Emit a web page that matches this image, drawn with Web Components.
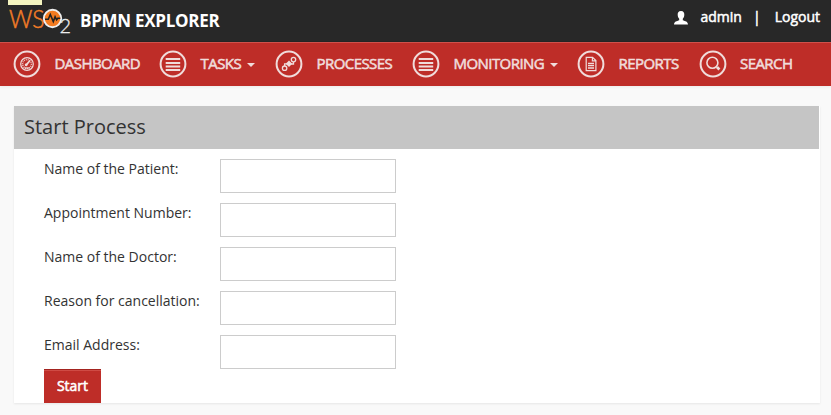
<!DOCTYPE html>
<html lang="en"><head><meta charset="utf-8"><title>BPMN Explorer</title>
<style>html,body{margin:0;height:100%;overflow:hidden;background:#f9f9f9;font-family:"Open Sans","Noto Sans",sans-serif;color:#333}</style></head>
<body><bpmn-app></bpmn-app>
<script>
class Base extends HTMLElement{
  connectedCallback(){ if(!this.shadowRoot) this.attachShadow({mode:'open'}).innerHTML=this.view(); }
}
const ICONS={
 gauge:'<circle cx="14" cy="14" r="6.3" stroke-width="1.2"/><circle cx="14" cy="14" r="4.4" stroke-width="1.5" stroke-dasharray="1 .9" opacity=".85"/><path d="M12.7 15.6 17 10.5" stroke-width="1.7"/><circle cx="13.2" cy="14.8" r="1.4" fill="#f0dcdb" stroke="none"/><path d="M11.5 18h5" stroke-width="1.2"/>',
 list:'<path d="M6.700 9h14.500M6.700 13h14.500M6.700 16.500h14.500M6.700 20h14.500" stroke-width="2.1"/>',
 flow:'<circle cx="9.6" cy="18.2" r="2.2" stroke-width="1.3"/><circle cx="18.5" cy="9.600" r="2.200" stroke-width="1.300"/><path d="m14 10.500 3.300 3.300-3.300 3.300-3.300-3.300z" fill="#f0dcdb" stroke="none"/><path d="M9.600 16v-2.200h3M15 14h3.500v-2" stroke-width="1.300"/>',
 doc:'<path d="M9.2 7.3h6.400l3.300 3.300v10.100H9.200zM15.400 7.500v3.300h3.400" stroke-width="1.200"/><path d="M11 13.500h6M11 15.700h6M11 18h6" stroke-width="1.300"/>',
 search:'<circle cx="13.400" cy="12.700" r="5.500" stroke-width="1.600"/><path d="m17.300 16.500 1.400 1.400" stroke-width="1.500"/><path d="m18.200 17.300 2.200 2.200" stroke-width="2.800"/>'
};
customElements.define('nav-icon',class extends Base{view(){return `<style>:host{display:block;width:28px;height:28px}svg{display:block}</style><svg width="28" height="28" fill="none" stroke="#f0dcdb"><circle cx="14" cy="14" r="12.400" stroke-width="2"/>${ICONS[this.getAttribute('name')]}</svg>`}});
customElements.define('nav-item',class extends Base{view(){return `<style>:host{display:flex;align-items:center;flex:none;color:#f0dcdb;font-size:15px;line-height:20px;font-weight:400;-webkit-text-stroke:.55px;letter-spacing:-.56px;white-space:nowrap}span{padding-bottom:2px}nav-icon{margin-right:13.500px}i{display:block;border:4px solid transparent;border-top-color:#f0dcdb;border-bottom:0;margin:2px 0 0 6px}</style><nav-icon name="${this.getAttribute('icon')}"></nav-icon><span><slot></slot></span>${this.hasAttribute('menu')?'<i></i>':''}`}});
customElements.define('wso-logo',class extends Base{view(){return `<style>:host{display:block;width:64px;height:36px}svg{display:block}text{font-family:Lato,sans-serif}</style>
<svg width="64" height="36"><text x="1" y="27.500" font-size="25" font-weight="300" fill="#f07c27" stroke="#f07c27" stroke-width=".5" textLength="35.500" lengthAdjust="spacingAndGlyphs">WS</text><circle cx="44.500" cy="18.500" r="8.700" fill="#f47b20" stroke="#eee" stroke-width="1.900"/><path d="M37 19.200h3.300l2-4.700 3 7 1.800-4.700 1.500 3 1.200-1.500h2.500" fill="none" stroke="#222" stroke-width="1.600"/><text x="51.500" y="32.500" font-size="20" font-weight="300" fill="#eee" stroke="#eee" stroke-width=".3" textLength="11.500" lengthAdjust="spacingAndGlyphs">2</text></svg>`}});
customElements.define('top-bar',class extends Base{view(){return `<style>:host{display:flex;box-sizing:border-box;height:42px;background:#282828;color:#fff;padding:0 11px 0 8px;position:relative;border-bottom:1px solid #242424}
b{font-size:17px;font-weight:700;line-height:41px;width:142px;white-space:nowrap;margin-left:8px;letter-spacing:-.27px}
.tab{position:absolute;left:8px;top:0;width:34px;height:5px;background:#f4f4c0}
.user{margin-left:auto;display:flex;font-size:14px;line-height:34px;-webkit-text-stroke:.5px;white-space:nowrap}svg{margin:11px 13px 0 0}.bar{margin:0 14px 0 11px}</style>
<wso-logo></wso-logo><b>BPMN EXPLORER</b><div class="user"><svg width="14" height="14" fill="#fff"><path d="M7 0c2.600 0 3.500 1.700 3.300 4C10.200 5.800 9.600 7 8.800 7.700v1.500c2.400.9 5 1.300 5.200 4.300H0c.2-3 2.800-3.400 5.200-4.300V7.700C4.400 7 3.800 5.800 3.700 4 3.500 1.700 4.400 0 7 0z"/></svg><span class="name">admin</span><span class="bar">|</span><span class="out">Logout</span></div><div class="tab"></div>`}});
customElements.define('nav-bar',class extends Base{view(){return `<style>:host{display:grid;grid-template-columns:146px 116px 137px 165px 121.500px auto;align-items:center;box-sizing:border-box;height:44px;background:#be2d28;border-top:1px solid #d0514b;padding:0 0 1px 13px;box-shadow:0 1px 3px rgba(0,0,0,.06)}</style><slot></slot>`}});
customElements.define('form-row',class extends Base{view(){return `<style>:host{display:flex;flex:none;height:44px}label{width:176px;font-size:14px;line-height:20px;white-space:nowrap}input{box-sizing:border-box;width:176px;height:34px;border:1px solid #ccc;background:#fff;margin:0;padding:6px 12px;font:inherit;border-radius:0}</style><label><slot></slot></label><input type="text">`}});
customElements.define('process-panel',class extends Base{view(){return `<style>:host{display:block;box-sizing:border-box;width:806px;height:297px;margin:20px 0 0 14px;background:#fff;box-shadow:0 1px 2px rgba(0,0,0,.08)}
h1{margin:0 1px 0 0;height:43px;background:#c5c5c5;padding-left:10px;font-size:20px;font-weight:400;line-height:41px}
.rows{display:flex;flex-direction:column;height:210px;padding:10px 0 0 30px}
button{display:block;box-sizing:border-box;width:57px;height:34px;margin:0 0 0 30px;padding:0 0 2px;border:0;border-top:1px solid #a3231f;box-shadow:inset 0 1px #cf4b45;background:#be2d28;color:#fff;font:400 14px/31px "Open Sans",sans-serif;-webkit-text-stroke:.55px}</style>
<h1><span>Start Process</span></h1><div class="rows"><slot></slot></div><button>Start</button>`}});
customElements.define('bpmn-app',class extends Base{view(){return `<style>:host{display:block;height:100%}</style><top-bar></top-bar>
<nav-bar><nav-item icon="gauge">DASHBOARD</nav-item><nav-item icon="list" menu>TASKS</nav-item><nav-item icon="flow">PROCESSES</nav-item><nav-item icon="list" menu>MONITORING</nav-item><nav-item icon="doc">REPORTS</nav-item><nav-item icon="search">SEARCH</nav-item></nav-bar>
<process-panel><form-row>Name of the Patient:</form-row><form-row>Appointment Number:</form-row><form-row>Name of the Doctor:</form-row><form-row>Reason for cancellation:</form-row><form-row>Email Address:</form-row></process-panel>`}});
</script></body></html>
